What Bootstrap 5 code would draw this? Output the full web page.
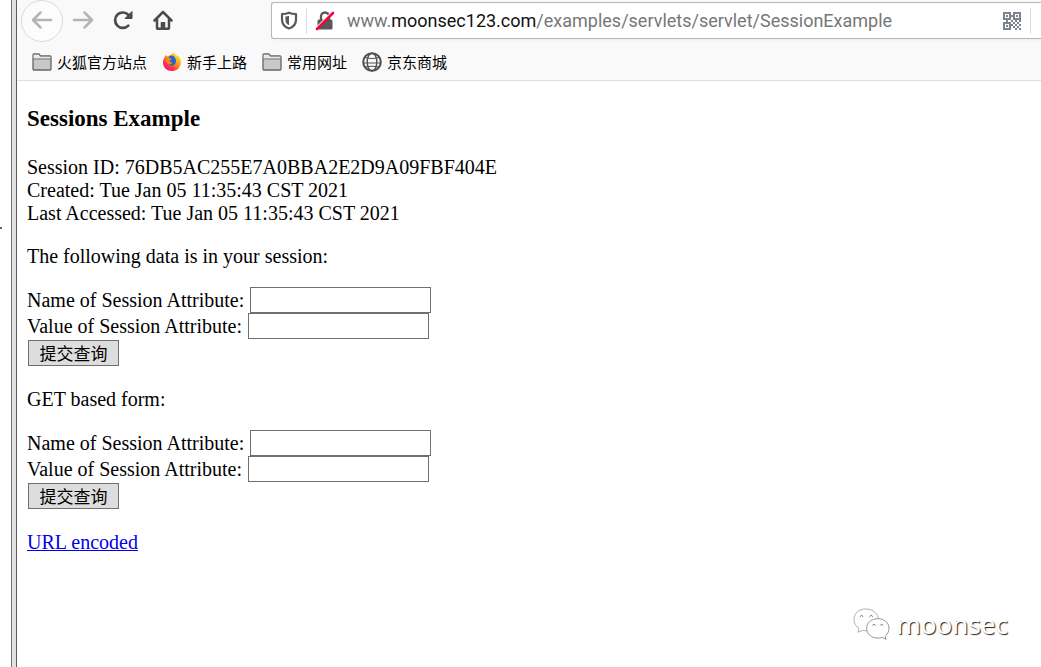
<!DOCTYPE html>
<html lang="zh-CN">
<head>
<meta charset="utf-8">
<meta name="viewport" content="width=device-width, initial-scale=1">
<title>Sessions Example</title>
<link href="https://cdn.jsdelivr.net/npm/bootstrap@5.3.0/dist/css/bootstrap.min.css" rel="stylesheet">
<style>
  body { background: #fff; color: #000; overflow-x: hidden; }
  .edge { width: 17px; padding-left: 11px; }
  .edge-bar { background: #e1e1e2; border-left: 1px solid #77777a; border-right: 1px solid #5c5c5e; }
  .edge-mark { left: 0; top: 227px; width: 2px; height: 2px; background: #666; }
  .window { min-width: 0; }
  .chrome { background: #f9f9fa; border-bottom: 1px solid #dedede; }
  .toolbar { height: 44px; padding-left: 4px; }
  .tool { border: 0; background: none; padding: 0 0 3px; width: 40px; height: 40px; }
  .tool-back { width: 42px; height: 42px; padding: 0 0 2px; border: 1px solid #dadadb; border-radius: 50%; background: #fcfcfc; }
  .address { height: 37px; margin-left: 88px; margin-top: 2px; border: 1px solid #b6b6b8; border-right: 0; border-radius: 3px 0 0 3px; background: #fff; box-shadow: 0 1px 3px #0000000d; padding-left: 8px; }
  .rule { width: 1px; height: 26px; background: #dedee0; }
  .rule-end { margin: 0 10px 0 9px; }
  .url { font-family: Roboto, sans-serif; font-size: 18px; line-height: 24px; color: #777; white-space: nowrap; }
  .url b { font-weight: 400; color: #111; }
  .bookmarks { height: 36px; padding-left: 15px; gap: 15px; }
  .bookmarks a { color: #000; font-family: "Noto Sans CJK SC", sans-serif; font-size: 15px; line-height: 20px; gap: 5px; text-decoration: none; }
  .page { padding: 25px 10px; font-family: "Liberation Serif", serif; font-size: 20px; line-height: 23px; }
  .page h3 { font-size: 23px; line-height: 26px; font-weight: 700; margin: 0 0 24px; }
  .page p { margin: 0 0 20px; }
  .page form { margin: -1px 0 20px; padding-bottom: 2px; }
  .field { height: 26px; gap: 6px; }
  .field input { width: 181px; height: 26px; border: 1px solid #6f6f70; padding: 1px 3px; background: #fff; font-size: 17px; }
  .send { width: 91px; height: 26px; margin: 1px 1px 0; padding: 0; border: 1px solid #6f6f70; background: #ddd; color: #000; font-family: "Noto Sans CJK SC", sans-serif; font-size: 17px; line-height: 24px; display: block; }
  .page a { color: #0000ee; text-decoration-thickness: 1px; }
  .watermark { right: 33px; bottom: 26px; gap: 7px; }
  .watermark span { font-family: "Noto Sans", sans-serif; font-size: 26px; line-height: 34px; color: #fff; text-shadow: 1px 1px 1px #222; }
</style>
</head>
<body>
<svg class="d-none" aria-hidden="true">
  <symbol id="folder" viewBox="0 0 20 18"><path d="M1 16V2q0-1 1-1h4.500q.8 0 1.200.8L8.300 3H18q1 0 1 1v12q0 1-1 1H2q-1 0-1-1z" fill="#c8c8ca" stroke="#656567" stroke-width="1.300"/><path d="M1.700 5.600V1.800h5l1.300 2h10.300v1.800z" fill="#e9e9ea"/><path d="M1 6h18" stroke="#777" stroke-width="1"/></symbol>
</svg>
<div class="d-flex min-vh-100 position-relative">
  <div class="edge d-flex flex-shrink-0"><div class="edge-bar flex-fill"></div><i class="edge-mark position-absolute"></i></div>
  <div class="window flex-fill">
    <header class="chrome">
      <div class="toolbar d-flex align-items-start">
        <button class="tool tool-back d-flex align-items-center justify-content-center" aria-label="后退"><svg width="22" height="20" viewBox="0 0 22 20" fill="none" stroke="#b4b4b5" stroke-width="2.500" stroke-linecap="round" stroke-linejoin="round"><path d="M20 10H2M9.500 2.500L2 10l7.500 7.500"/></svg></button>
        <button class="tool" aria-label="前进"><svg width="22" height="20" viewBox="0 0 22 20" fill="none" stroke="#b4b4b5" stroke-width="2.500" stroke-linecap="round" stroke-linejoin="round"><path d="M2 10h18M12.500 2.500L20 10l-7.500 7.500"/></svg></button>
        <button class="tool" aria-label="刷新"><svg width="20" height="20" viewBox="0 0 20 20" fill="none"><path d="M15.300 15.600A7.700 7.700 0 1 1 15.500 5" stroke="#4b4b4d" stroke-width="2.700" stroke-linecap="round"/><path d="M19 1.500v7h-7z" fill="#4b4b4d" stroke="#4b4b4d" stroke-linejoin="round"/></svg></button>
        <button class="tool" aria-label="主页"><svg width="20" height="20" viewBox="0 0 20 20" fill="none" stroke="#4b4b4d" stroke-width="2.500" stroke-linecap="round" stroke-linejoin="round"><path d="M1.500 10.500L10 2l8.500 8.500M4 9.500V18q0 .8.800.8h10.400q.8 0 .8-.8V9.500"/><path d="M8.300 19v-6.500h3.400V19" fill="#4b4b4d" stroke-width="1.200"/></svg></button>
        <div class="address d-flex align-items-center flex-fill">
          <svg width="18" height="19" viewBox="0 0 18 19" fill="none"><path d="M9 1.700C11 2.700 13.500 3 16 3v5.500c0 4.500-2.500 7.500-7 9-4.500-1.500-7-4.500-7-9V3c2.500 0 5-.3 7-1.300z" stroke="#58585a" stroke-width="2.200" stroke-linejoin="round"/><path d="M9 5v9.300c-2.500-1.200-3.600-3-3.600-6V5.600C6.800 5.500 8 5.300 9 5z" fill="#58585a"/></svg>
          <span class="rule ms-2 me-2"></span>
          <svg width="20" height="20" viewBox="0 0 20 20" fill="none"><path d="M6 9V5.500a4 4 0 0 1 8 0V9" stroke="#58585a" stroke-width="2.300"/><rect x="2.500" y="8.500" width="15" height="10" rx="1.500" fill="#58585a"/><path d="M1 17L17 1" stroke="#fff" stroke-width="1.500"/><path d="M2 18L18 2" stroke="#f2053f" stroke-width="2.600" stroke-linecap="round"/></svg>
          <span class="url flex-fill ms-2 ps-1">www.<b>moonsec123.com</b>/examples/servlets/servlet/SessionExample</span>
          <svg width="18" height="18" viewBox="0 0 18 18" fill="none" stroke="#7e8590" stroke-width="2"><rect x="1" y="1" width="6" height="6"/><rect x="11" y="1" width="6" height="6"/><rect x="1" y="11" width="6" height="6"/><path d="M3 4h2M13 4h2M3 14h2M7 4h4M4 8v2M8 9h2M12 9h2M16 9h2M10 11h2M14 11h2M8 13h2M12 13h2M16 13h2M10 15h2M14 15h2M12 17h2M16 17h2"/></svg>
          <span class="rule rule-end"></span>
        </div>
      </div>
      <nav class="bookmarks d-flex align-items-center" aria-label="书签">
        <a class="d-flex align-items-center" href="#"><svg width="20" height="18"><use href="#folder"/></svg>火狐官方站点</a>
        <a class="d-flex align-items-center" href="#"><svg width="20" height="20" viewBox="0 0 19 20"><defs><linearGradient id="flame" x1=".85" y1=".1" x2=".2" y2=".9"><stop offset="0" stop-color="#ffe52d"/><stop offset=".45" stop-color="#ff9418"/><stop offset=".75" stop-color="#ff3645"/><stop offset="1" stop-color="#f01a70"/></linearGradient></defs><path d="M3.500 3L5 4.500C7 3 9 3 10 1c3 .5 4 2 5 3.500l.5-1C18 6 19 9 18.300 12c-1 4.500-4.700 7-8.800 7C4.500 19 .5 15.500.5 10.500.5 7.500 2 5 3.500 3z" fill="url(#flame)"/><path d="M6 5c2-2 4.500-2 6 0 2 2.500 2 5.500 0 7.500-2.300 1.800-5 1-6-1.200 1.800.8 3 .2 4-1-2.500 0-3-1-2.500-2.300l2-1.200C8 7 7 6.500 6 5z" fill="#1768cf"/><path d="M3.500 6c1.800-.5 3.500 0 5.500 1.300L7.200 8.500c-.6 1.300.2 2.300 2.500 2.300-1.200 1.600-3 2-4.700 1C3.200 10.500 2.700 8 3.500 6z" fill="#ff8020"/></svg>新手上路</a>
        <a class="d-flex align-items-center" href="#"><svg width="20" height="18"><use href="#folder"/></svg>常用网址</a>
        <a class="d-flex align-items-center" href="#"><svg width="20" height="20" viewBox="0 0 20 20" fill="none" stroke="#505052"><circle cx="10" cy="10" r="8.800" stroke-width="2"/><ellipse cx="10" cy="10" rx="4.800" ry="8.800" stroke-width="1.400"/><path d="M3 5.500q7 2 14 0M1 11h18M3 15q7-1.500 14 0" stroke-width="1.200"/></svg>京东商城</a>
      </nav>
    </header>
    <main class="page">
      <h3>Sessions Example</h3>
      <p>Session ID: 76DB5AC255E7A0BBA2E2D9A09FBF404E<br>Created: Tue Jan 05 11:35:43 CST 2021<br>Last Accessed: Tue Jan 05 11:35:43 CST 2021</p>
      <p>The following data is in your session:</p>
      <form>
        <div class="field d-flex align-items-center"><label for="n1">Name of Session Attribute:</label><input id="n1" type="text"></div>
        <div class="field d-flex align-items-center"><label for="v1">Value of Session Attribute:</label><input id="v1" type="text"></div>
        <button class="send" type="button">提交查询</button>
      </form>
      <p>GET based form:</p>
      <form>
        <div class="field d-flex align-items-center"><label for="n2">Name of Session Attribute:</label><input id="n2" type="text"></div>
        <div class="field d-flex align-items-center"><label for="v2">Value of Session Attribute:</label><input id="v2" type="text"></div>
        <button class="send" type="button">提交查询</button>
      </form>
      <a href="#">URL encoded</a>
    </main>
  </div>
  <div class="watermark position-absolute d-flex align-items-center">
    <svg width="37" height="33" viewBox="0 0 38 34" fill="#fff" stroke="#777" stroke-width=".8"><path d="M13 1C6 1 1 5.500 1 12c0 4 2 7 5 9l-1 4 5-2c2 .6 4 .6 6 .3L26 10C24 4 19 1 13 1z" stroke="#999"/><path d="M25.500 11C19 11 14 15 14 21s5 10 11.500 10q2.500 0 4.500-.7l4 2-1-3.300c2.500-2 4-4.500 4-8 0-6-5-10-11.500-10z"/><path d="M7 9q1.700-3 3.500 0M17 9q1.700-3 3.500 0M20 18q1.500-2.500 3 0M28 18q1.500-2.500 3 0" fill="none" stroke="#444"/></svg>
    <span>moonsec</span>
  </div>
</div>
<script src="https://cdn.jsdelivr.net/npm/bootstrap@5.3.0/dist/js/bootstrap.bundle.min.js"></script>
</body>
</html>
